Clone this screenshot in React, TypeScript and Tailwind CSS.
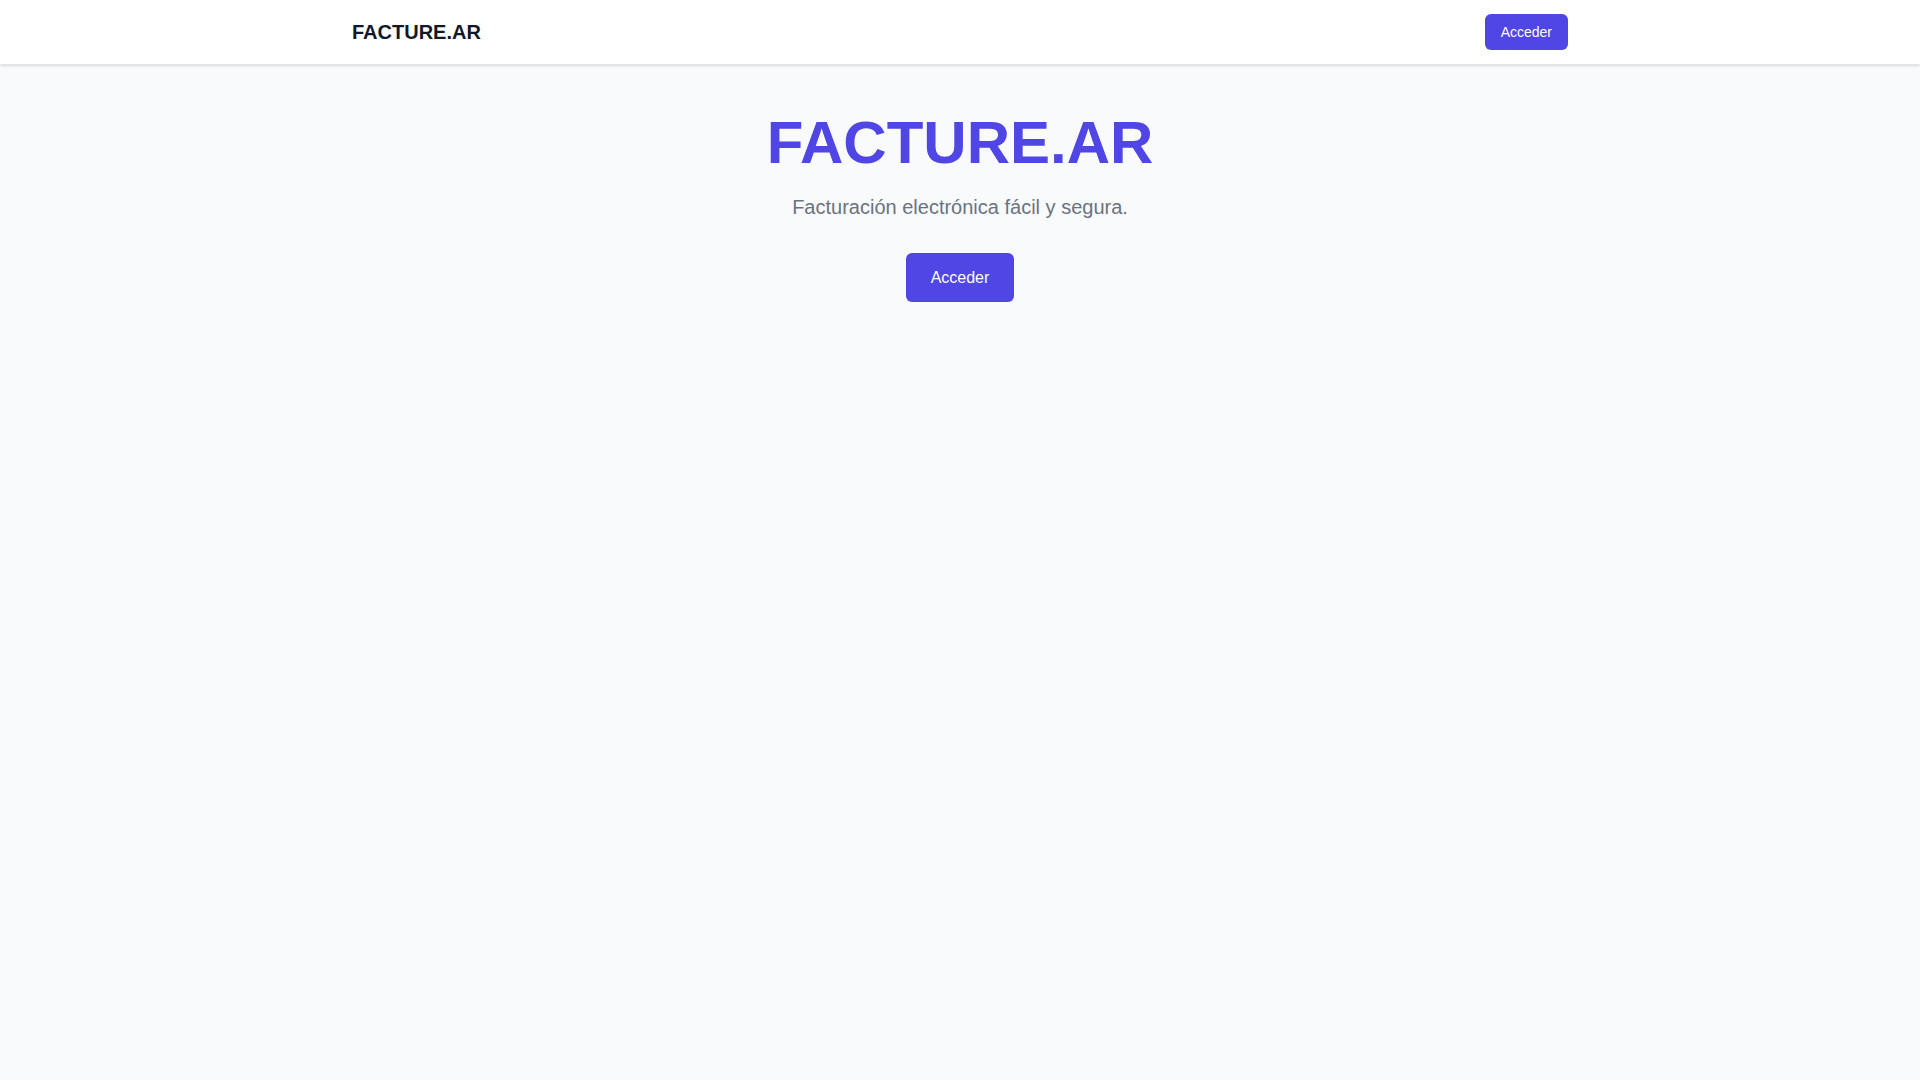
import React from "react";

const App = () => {
  return (
    <div className="min-h-screen bg-[#f9fafb] font-['Liberation_Sans',Arial,sans-serif]">
      {/* Top bar */}
      <header className="bg-white border-b border-[#e5e7eb] shadow-sm">
        <div className="max-w-7xl mx-auto px-8 h-16 flex items-center justify-between">
          <span className="text-xl font-bold text-[#111827]">FACTURE.AR</span>
          <button className="px-4 py-2 text-sm text-white bg-[#4f46e5] rounded-md hover:bg-[#4338ca]">
            Acceder
          </button>
        </div>
      </header>

      {/* Hero */}
      <main className="max-w-7xl mx-auto px-8 pt-12 flex flex-col items-center text-center">
        <h1 className="text-6xl font-bold text-[#4f46e5]">FACTURE.AR</h1>
        <p className="mt-5 text-xl text-[#6b7280]">Facturación electrónica fácil y segura.</p>
        <button className="mt-8 h-[49px] px-[25px] text-base text-white bg-[#4f46e5] rounded-md hover:bg-[#4338ca]">
          Acceder
        </button>
      </main>
    </div>
  );
};

export default App;
